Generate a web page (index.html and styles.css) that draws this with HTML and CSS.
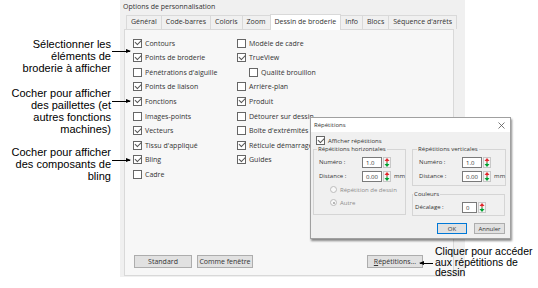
FILE: index.html
```html
<!DOCTYPE html>
<html lang="fr">
<head>
    <meta charset="UTF-8">
    <title>Options de personnalisation</title>
    <link rel="stylesheet" href="styles.css">
</head>
<body>
<div class="canvas">

    <!-- Callouts on the left -->
    <div class="note note-select">Sélectionner les<br>éléments de<br>broderie à afficher</div>
    <div class="note note-functions">Cocher pour afficher<br>des paillettes (et<br>autres fonctions<br>machines)</div>
    <div class="note note-bling">Cocher pour afficher<br>des composants de<br>bling</div>
    <div class="note note-repeat">Cliquer pour accéder<br>aux répétitions de<br>dessin</div>

    <div class="leader leader-select"></div>
    <div class="leader leader-functions"></div>
    <div class="leader leader-bling"></div>
    <div class="leader leader-repeat"></div>

    <!-- Main dialog -->
    <div class="dialog">
        <div class="dialog-title">Options de personnalisation</div>
        <div class="tabs">
            <span class="tab">Général</span>
            <span class="tab">Code-barres</span>
            <span class="tab">Coloris</span>
            <span class="tab">Zoom</span>
            <span class="tab active">Dessin de broderie</span>
            <span class="tab">Info</span>
            <span class="tab">Blocs</span>
            <span class="tab">Séquence d'arrêts</span>
        </div>
        <div class="panel">
            <div class="columns">
                <div class="col col-left">
                    <label class="opt"><span class="cb on"></span>Contours</label>
                    <label class="opt"><span class="cb on"></span>Points de broderie</label>
                    <label class="opt"><span class="cb"></span>Pénétrations d'aiguille</label>
                    <label class="opt"><span class="cb on"></span>Points de liaison</label>
                    <label class="opt"><span class="cb on"></span>Fonctions</label>
                    <label class="opt"><span class="cb"></span>Images-points</label>
                    <label class="opt"><span class="cb on"></span>Vecteurs</label>
                    <label class="opt"><span class="cb on"></span>Tissu d'appliqué</label>
                    <label class="opt"><span class="cb on"></span>Bling</label>
                    <label class="opt"><span class="cb"></span>Cadre</label>
                </div>
                <div class="col">
                    <label class="opt"><span class="cb"></span>Modèle de cadre</label>
                    <label class="opt"><span class="cb on"></span>TrueView</label>
                    <label class="opt sub"><span class="cb"></span>Qualité brouillon</label>
                    <label class="opt"><span class="cb"></span>Arrière-plan</label>
                    <label class="opt"><span class="cb on"></span>Produit</label>
                    <label class="opt"><span class="cb"></span>Détourer sur dessin</label>
                    <label class="opt"><span class="cb"></span>Boîte d'extrémités</label>
                    <label class="opt"><span class="cb on"></span>Réticule démarrage</label>
                    <label class="opt"><span class="cb on"></span>Guides</label>
                </div>
            </div>
            <div class="footer">
                <button class="btn btn-std">Standard</button>
                <button class="btn btn-win">Comme fenêtre</button>
                <button class="btn btn-rep"><u>R</u>épétitions...</button>
            </div>
        </div>
    </div>

    <!-- Repetitions dialog on top -->
    <div class="popup">
        <div class="popup-title">
            <span>Répétitions</span>
            <svg class="close" width="7" height="7" viewBox="0 0 7 7">
                <path d="M0.5 0.5 L6.5 6.5 M6.5 0.5 L0.5 6.5" stroke="#555" stroke-width="0.8"/>
            </svg>
        </div>
        <div class="popup-body">
            <label class="opt small show"><span class="cb on"></span>Afficher répétitions</label>
            <div class="groups">
                <fieldset class="group group-h">
                    <legend>Répétitions horizontales</legend>
                    <div class="field"><span class="field-label">Numéro :</span><span class="num">1.0</span><span class="spin"></span></div>
                    <div class="field"><span class="field-label">Distance :</span><span class="num">0.00</span><span class="spin"></span><span class="unit">mm</span></div>
                    <div class="radio"><span class="rb"></span>Répétition de dessin</div>
                    <div class="radio"><span class="rb on"></span>Autre</div>
                </fieldset>
                <div class="right-groups">
                    <fieldset class="group group-v">
                        <legend>Répétitions verticales</legend>
                        <div class="field"><span class="field-label">Numéro :</span><span class="num">1.0</span><span class="spin"></span></div>
                        <div class="field"><span class="field-label">Distance :</span><span class="num">0.00</span><span class="spin"></span><span class="unit">mm</span></div>
                    </fieldset>
                    <fieldset class="group group-c">
                        <legend>Couleurs</legend>
                        <div class="field"><span class="field-label">Décalage :</span><span class="num short">0</span><span class="spin"></span></div>
                    </fieldset>
                </div>
            </div>
            <div class="popup-buttons">
                <button class="btn btn-ok">OK</button>
                <button class="btn btn-cancel">Annuler</button>
            </div>
        </div>
    </div>

</div>
</body>
</html>
```

FILE: styles.css
```css
body {
    margin: 0;
    background: #ffffff;
    font-family: "Open Sans", "Noto Sans", sans-serif;
    color: #333333;
}
.canvas {
    position: relative;
    width: 538px;
    height: 288px;
    display: flex;
    padding-left: 120px;
    box-sizing: border-box;
}

/* callouts */
.note {
    position: absolute;
    font-family: "Liberation Sans", Arial, sans-serif;
    font-size: 11px;
    line-height: 12px;
    color: #000;
}
.note-select, .note-functions, .note-bling {
    right: 427px;
    text-align: right;
}
.note-select { top: 38px; }
.note-functions { top: 87px; }
.note-bling { top: 146px; }
.note-repeat {
    left: 435px;
    top: 246px;
    font-size: 10.5px;
    line-height: 10.5px;
    text-align: left;
}
.leader {
    position: absolute;
    height: 1px;
    background: #000;
}
.leader::after {
    content: "";
    position: absolute;
    top: -2px;
    border-top: 2.5px solid transparent;
    border-bottom: 2.5px solid transparent;
}
.leader-select, .leader-functions, .leader-bling {
    left: 112px;
    width: 18px;
}
.leader-select::after, .leader-functions::after, .leader-bling::after {
    right: -1px;
    border-left: 5px solid #000;
}
.leader-select { top: 51px; }
.leader-functions { top: 101px; }
.leader-bling { top: 160px; }
.leader-repeat {
    left: 420px;
    width: 13px;
    top: 263px;
}
.leader-repeat::after {
    left: -1px;
    border-right: 5px solid #000;
}

/* main dialog */
.dialog {
    width: 345px;
    height: 277px;
    background: #f0f0f0;
    display: flex;
    flex-direction: column;
    font-size: 7px;
}
.dialog-title {
    height: 15px;
    line-height: 14px;
    padding-left: 3px;
}
.tabs {
    display: flex;
    height: 14px;
    padding-left: 6px;
    align-items: flex-end;
}
.tab {
    height: 13px;
    line-height: 12px;
    padding: 0 4px;
    border: 1px solid #d9d9d9;
    border-bottom: none;
    margin-right: -1px;
    background: #f0f0f0;
}
.tab.active {
    height: 15px;
    margin-bottom: -1px;
    background: #ffffff;
    position: relative;
    z-index: 1;
    line-height: 14px;
}
.panel {
    margin: 0 11px 1px 4px;
    flex: 1;
    background: #f7f7f7;
    border: 1px solid #d9d9d9;
    display: flex;
    flex-direction: column;
}
.columns {
    display: flex;
    padding: 6px 0 0 8px;
}
.col {
    display: flex;
    flex-direction: column;
}
.col-left {
    width: 104px;
}
.opt {
    display: flex;
    align-items: center;
    height: 14.55px;
    white-space: nowrap;
}
.opt.sub {
    padding-left: 12px;
}
.cb {
    width: 7px;
    height: 7px;
    border: 1px solid #666;
    background: #fff;
    margin-right: 3px;
    position: relative;
    flex-shrink: 0;
}
.cb.on::after {
    content: "";
    position: absolute;
    left: 1px;
    top: 0.5px;
    width: 4.5px;
    height: 2.5px;
    border-left: 1px solid #555;
    border-bottom: 1px solid #555;
    transform: rotate(-45deg);
}
.footer {
    margin-top: auto;
    display: flex;
    gap: 5px;
    padding: 0 30px 7px 9px;
}
.btn {
    font-family: inherit;
    font-size: 7px;
    color: #333;
    height: 13px;
    padding: 0;
    background: #e1e1e1;
    border: 1px solid #adadad;
    border-radius: 0;
}
.btn-std { width: 58px; }
.btn-win { width: 56px; }
.btn-rep { width: 56px; margin-left: auto; }

/* repetitions dialog */
.popup {
    position: absolute;
    left: 310px;
    top: 117px;
    width: 201px;
    height: 122px;
    background: #f0f0f0;
    border: 1px solid #a0a0a0;
    box-shadow: 1px 2px 2px rgba(0, 0, 0, 0.45);
    font-size: 6px;
    box-sizing: border-box;
}
.popup-title {
    height: 14px;
    background: #ffffff;
    display: flex;
    align-items: center;
    justify-content: space-between;
    padding: 0 5px 0 3px;
}
.popup-body {
    padding: 4px 4px 0 2px;
}
.opt.small {
    height: 9px;
    margin-left: 3px;
}
.groups {
    display: flex;
    gap: 6px;
}
.group {
    margin: 0;
    border: 1px solid #d5d5d5;
    padding: 2px 0 0 5px;
    box-sizing: border-box;
}
.group legend {
    padding: 0 1px;
    margin-left: -2px;
    line-height: 8px;
}
.group-h {
    width: 94px;
    height: 70px;
}
.right-groups {
    display: flex;
    flex-direction: column;
    gap: 4px;
}
.group-v {
    width: 93px;
    height: 41px;
    padding-left: 6px;
}
.group-c {
    width: 93px;
    height: 26px;
    padding-left: 2px;
}
.field {
    display: flex;
    align-items: center;
    height: 14px;
}
.field-label {
    width: 43px;
}
.group-c .field-label {
    width: 47px;
}
.num {
    width: 20px;
    height: 11px;
    line-height: 11px;
    padding-left: 3px;
    box-sizing: border-box;
    background: #fff;
    border: 1px solid #7a7a7a;
}
.num.short {
    width: 15px;
}
.spin {
    width: 8px;
    height: 11px;
    margin-left: 1px;
    box-sizing: border-box;
    background: #f4f4f4 url("data:image/svg+xml;utf8,<svg xmlns='http://www.w3.org/2000/svg' width='6' height='9' viewBox='0 0 6 9'><path d='M3 0 L5.5 3 L0.5 3 Z' fill='%23e0282c'/><rect x='2.4' y='3' width='1.2' height='1.5' fill='%23e0282c'/><rect x='2.4' y='4.5' width='1.2' height='1.5' fill='%2300a030'/><path d='M0.5 6 L5.5 6 L3 9 Z' fill='%2300a030'/></svg>") center no-repeat;
    border: 1px solid #c8c8c8;
}
.unit {
    margin-left: 3px;
}
.radio {
    display: flex;
    align-items: center;
    height: 13px;
    padding-left: 11px;
    color: #8c8c8c;
}
.rb {
    width: 5px;
    height: 5px;
    border: 1px solid #bcbcbc;
    border-radius: 50%;
    background: #f8f8f8;
    margin-right: 3px;
    position: relative;
}
.rb.on::after {
    content: "";
    position: absolute;
    left: 1.5px;
    top: 1.5px;
    width: 2px;
    height: 2px;
    border-radius: 50%;
    background: #a0a0a0;
}
.popup-buttons {
    display: flex;
    justify-content: flex-end;
    gap: 7px;
    margin-top: 7px;
    padding-right: 1px;
}
.btn-ok, .btn-cancel {
    height: 11px;
    font-size: 6px;
}
.btn-ok {
    width: 30px;
    border-color: #0078d7;
}
.btn-cancel {
    width: 31px;
}
```
